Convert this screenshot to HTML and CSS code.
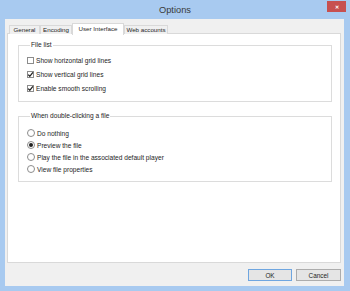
FILE: index.html
```html
<!DOCTYPE html>
<html lang="en">
<head>
    <meta charset="UTF-8">
    <title>Options</title>
    <link rel="stylesheet" href="styles.css">
</head>
<body>
    <div class="window">
        <div class="titlebar">
            <span class="title">Options</span>
            <span class="close">&#x2715;</span>
        </div>

        <div class="client">
            <div class="tabs">
                <div class="tab">General</div>
                <div class="tab">Encoding</div>
                <div class="tab active">User Interface</div>
                <div class="tab">Web accounts</div>
            </div>

            <div class="panel">
                <fieldset class="group group-list">
                    <legend>File list</legend>
                    <div class="row"><span class="check"></span>Show horizontal grid lines</div>
                    <div class="row"><span class="check checked"><svg viewBox="0 0 7 7"><path d="M1.2 3.6 L2.8 5.3 L5.9 1.4" /></svg></span>Show vertical grid lines</div>
                    <div class="row"><span class="check checked"><svg viewBox="0 0 7 7"><path d="M1.2 3.6 L2.8 5.3 L5.9 1.4" /></svg></span>Enable smooth scrolling</div>
                </fieldset>

                <fieldset class="group group-click">
                    <legend>When double-clicking a file</legend>
                    <div class="row radio-row"><span class="radio"></span>Do nothing</div>
                    <div class="row radio-row"><span class="radio checked"></span>Preview the file</div>
                    <div class="row radio-row"><span class="radio"></span>Play the file in the associated default player</div>
                    <div class="row radio-row"><span class="radio"></span>View file properties</div>
                </fieldset>
            </div>

            <div class="buttons">
                <button class="btn default">OK</button>
                <button class="btn">Cancel</button>
            </div>
        </div>
    </div>
</body>
</html>
```

FILE: styles.css
```css
html, body {
    margin: 0;
    padding: 0;
    background-color: #a8caf0;
    font-family: "Liberation Sans", Arial, sans-serif;
}

.window {
    display: flex;
    flex-direction: column;
    width: 350px;
    height: 291px;
}

.titlebar {
    position: relative;
    height: 19px;
    display: flex;
    align-items: center;
    justify-content: center;
}

.title {
    font-size: 9.3px;
    color: #3a3a3a;
    margin-top: 1px;
}

/* sits over the right corner of the title bar */
.close {
    position: absolute;
    top: 1px;
    right: 4px;
    width: 19px;
    height: 11px;
    background-color: #c75050;
    color: #fff;
    font-size: 5px;
    font-weight: bold;
    display: flex;
    align-items: center;
    justify-content: center;
}

.client {
    flex: 1;
    display: flex;
    flex-direction: column;
    margin: 0 6px 5px 5px;
    padding: 4px 3px 5px 2px;
    background-color: #f0f0f0;
    font-size: 6.6px;
    color: #1e1e1e;
}

.tabs {
    display: flex;
    align-items: flex-end;
    height: 11px;
    padding-left: 2px;
    position: relative;
    z-index: 1;
    margin-bottom: -1px;
    font-size: 6.2px;
}

.tab {
    height: 9px;
    box-sizing: border-box;
    border: 1px solid #d9d9d9;
    border-bottom: none;
    background-color: #f0f0f0;
    text-align: center;
    padding: 0;
    line-height: 8px;
    white-space: nowrap;
}

.tab:nth-child(1) { width: 31px; }
.tab:nth-child(2) { width: 32px; }
.tab:nth-child(4) { width: 44px; }

.tab.active {
    width: 52px;
    height: 12px;
    line-height: 10px;
    background-color: #fff;
    margin-bottom: -1px;
}

.panel {
    flex: 1;
    background-color: #fff;
    border: 1px solid #d9d9d9;
    padding: 7px 8px 0 10px;
}

.group {
    margin: 0;
    padding: 4px 0 6px 8px;
    border: 1px solid #dcdcdc;
    border-radius: 0;
}

.group legend {
    margin-left: 3px;
    padding: 0 1px;
    line-height: 8px;
}

.group-click {
    margin-top: 10px;
    padding-top: 7px;
}

.row {
    display: flex;
    align-items: center;
    height: 14px;
    white-space: nowrap;
}

.radio-row {
    height: 12px;
}

.check {
    width: 7px;
    height: 7px;
    box-sizing: border-box;
    border: 1px solid #8c8c8c;
    background-color: #fff;
    margin-right: 2px;
    display: flex;
}

.check svg {
    width: 7px;
    height: 7px;
    margin: -1px;
}

.check svg path {
    fill: none;
    stroke: #222;
    stroke-width: 1.3;
}

.radio {
    width: 8px;
    height: 8px;
    box-sizing: border-box;
    border: 1px solid #8c8c8c;
    border-radius: 50%;
    background-color: #fff;
    margin-right: 2px;
    display: flex;
    align-items: center;
    justify-content: center;
}

.radio.checked::after {
    content: "";
    width: 4px;
    height: 4px;
    border-radius: 50%;
    background-color: #222;
}

.buttons {
    display: flex;
    justify-content: flex-end;
    gap: 4px;
    margin-top: 6px;
}

.btn {
    width: 45px;
    height: 12px;
    padding: 0;
    margin: 0;
    font-family: "Liberation Sans", Arial, sans-serif;
    font-size: 6.4px;
    color: #1e1e1e;
    background-color: #e5e5e5;
    border: 1px solid #acacac;
    border-radius: 0;
}

.btn.default {
    width: 44px;
    border-color: #6fa6e0;
}
```
